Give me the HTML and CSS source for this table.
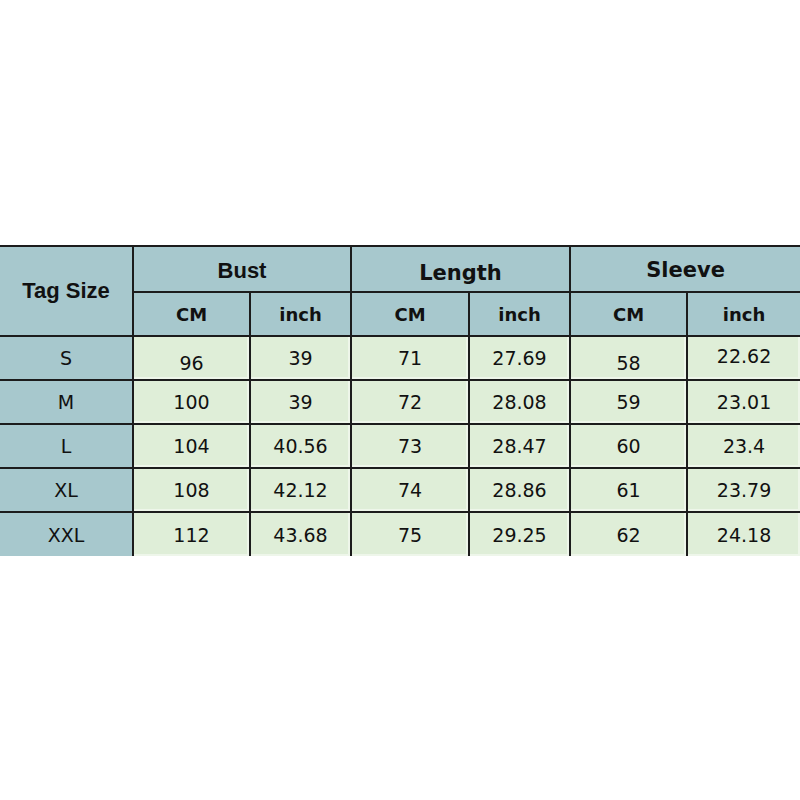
FILE: index.html
```html
<!DOCTYPE html>
<html>
<head>
<meta charset="utf-8">
<link rel="stylesheet" href="styles.css">
</head>
<body>
<div class="page">
<table class="size-table">
  <colgroup>
    <col class="c-tag"><col class="c-cm"><col class="c-in"><col class="c-cm2"><col class="c-in"><col class="c-cm"><col class="c-last">
  </colgroup>
  <thead>
    <tr class="row-group">
      <th rowspan="2" class="tag-head">Tag Size</th>
      <th colspan="2" class="group arial">Bust</th>
      <th colspan="2" class="group verd length">Length</th>
      <th colspan="2" class="group verd">Sleeve</th>
    </tr>
    <tr class="row-unit">
      <th class="unit">CM</th><th class="unit">inch</th>
      <th class="unit">CM</th><th class="unit">inch</th>
      <th class="unit">CM</th><th class="unit">inch</th>
    </tr>
  </thead>
  <tbody>
    <tr><th class="size">S</th><td class="low">96</td><td>39</td><td>71</td><td>27.69</td><td class="low">58</td><td class="high">22.62</td></tr>
    <tr><th class="size">M</th><td>100</td><td>39</td><td>72</td><td>28.08</td><td>59</td><td>23.01</td></tr>
    <tr><th class="size">L</th><td>104</td><td>40.56</td><td>73</td><td>28.47</td><td>60</td><td>23.4</td></tr>
    <tr><th class="size">XL</th><td>108</td><td>42.12</td><td>74</td><td>28.86</td><td>61</td><td>23.79</td></tr>
    <tr><th class="size">XXL</th><td>112</td><td>43.68</td><td>75</td><td>29.25</td><td>62</td><td>24.18</td></tr>
  </tbody>
</table>
</div>
</body>
</html>
```
FILE: styles.css
```css
html, body {
  margin: 0;
  padding: 0;
  background: #ffffff;
}
.page {
  width: 800px;
  height: 800px;
  padding-top: 245px;
  box-sizing: border-box;
}
.size-table {
  width: 800px;
  table-layout: fixed;
  border-collapse: collapse;
  color: #111;
  font-family: "DejaVu Sans", "Noto Sans", sans-serif;
}
.c-tag { width: 133px; }
.c-cm { width: 117px; }
.c-cm2 { width: 118px; }
.c-in { width: 101px; }
.c-last { width: 113px; }

.size-table th,
.size-table td {
  border: 2px solid #1c1c1c;
  padding: 0;
  text-align: center;
  vertical-align: middle;
}
.size-table tr > :first-child { border-left: none; }
.size-table tr > :last-child { border-right: none; }
.size-table tbody tr:last-child > * { border-bottom: none; }
.size-table .tag-head { border-left: none; }

.size-table thead th {
  background: #a7c8cd;
}
.row-group { height: 46px; }
.row-unit { height: 44px; }
.size-table tbody tr { height: 44px; }

.tag-head {
  font-family: "Liberation Sans", Arial, sans-serif;
  font-weight: bold;
  font-size: 22px;
}
.group { font-weight: bold; }
.size-table th.arial {
  font-family: "Liberation Sans", Arial, sans-serif;
  font-size: 22px;
  padding-top: 3px;
}
.size-table th.verd {
  font-family: "DejaVu Sans", Verdana, sans-serif;
  font-size: 21px;
  padding-top: 2px;
}
.size-table th.length { padding-top: 8px; }
.unit {
  font-family: "DejaVu Sans", sans-serif;
  font-weight: bold;
  font-size: 18px;
}
.size-table tbody th.size {
  background: #a7c8cd;
  font-weight: normal;
  font-size: 19px;
}
.size-table tbody td {
  background: #dfeed8;
  font-size: 19px;
  box-shadow: inset -2px -2px 0 #eef6ea;
}
.size-table td.low { padding-top: 10px; }
.size-table td.high { padding-bottom: 4px; }
```
